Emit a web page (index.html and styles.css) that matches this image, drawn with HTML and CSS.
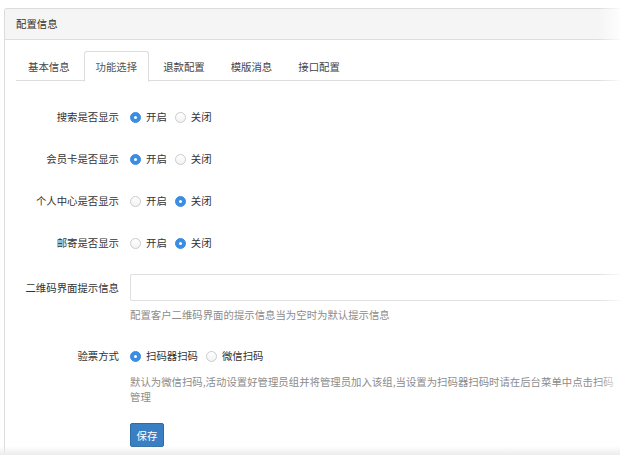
FILE: index.html
```html
<!DOCTYPE html>
<html lang="zh-CN">
<head>
    <meta charset="UTF-8">
    <title>配置信息</title>
    <link rel="stylesheet" href="styles.css">
</head>
<body>

    <div class="panel">
        <div class="panel-heading">配置信息</div>
        <div class="panel-body">
            <ul class="nav-tabs">
                <li><a href="#">基本信息</a></li>
                <li class="active"><a href="#">功能选择</a></li>
                <li><a href="#">退款配置</a></li>
                <li><a href="#">模版消息</a></li>
                <li><a href="#">接口配置</a></li>
            </ul>

            <form class="form">
                <div class="form-group">
                    <label class="control-label">搜索是否显示</label>
                    <div class="controls">
                        <label class="radio"><span class="dot checked"></span>开启</label>
                        <label class="radio"><span class="dot"></span>关闭</label>
                    </div>
                </div>
                <div class="form-group">
                    <label class="control-label">会员卡是否显示</label>
                    <div class="controls">
                        <label class="radio"><span class="dot checked"></span>开启</label>
                        <label class="radio"><span class="dot"></span>关闭</label>
                    </div>
                </div>
                <div class="form-group">
                    <label class="control-label">个人中心是否显示</label>
                    <div class="controls">
                        <label class="radio"><span class="dot"></span>开启</label>
                        <label class="radio"><span class="dot checked"></span>关闭</label>
                    </div>
                </div>
                <div class="form-group">
                    <label class="control-label">邮寄是否显示</label>
                    <div class="controls">
                        <label class="radio"><span class="dot"></span>开启</label>
                        <label class="radio"><span class="dot checked"></span>关闭</label>
                    </div>
                </div>
                <div class="form-group input-group">
                    <label class="control-label">二维码界面提示信息</label>
                    <div class="controls">
                        <input type="text" class="form-control">
                        <p class="help-block">配置客户二维码界面的提示信息当为空时为默认提示信息</p>
                    </div>
                </div>
                <div class="form-group ticket-group">
                    <label class="control-label">验票方式</label>
                    <div class="controls">
                        <div class="radio-row">
                            <label class="radio"><span class="dot checked"></span>扫码器扫码</label>
                            <label class="radio"><span class="dot"></span>微信扫码</label>
                        </div>
                        <p class="help-block long">默认为微信扫码,活动设置好管理员组并将管理员加入该组,当设置为扫码器扫码时请在后台菜单中点击扫码管理</p>
                        <button type="button" class="btn-primary">保存</button>
                    </div>
                </div>
            </form>
        </div>
    </div>

    <div class="fade-right"></div>
    <div class="fade-bottom"></div>

</body>
</html>
```

FILE: styles.css
```css
* {
    margin: 0;
    padding: 0;
    box-sizing: border-box;
}

html, body {
    height: 100%;
}

body {
    font-family: 'Noto Sans CJK SC', 'Liberation Sans', sans-serif;
    font-size: 10.4px;
    color: #333;
    background: #fff;
    overflow: hidden;
    position: relative;
}

/* Panel - right and bottom edges run off the shot */
.panel {
    margin: 8px 0 0 4px;
    height: calc(100% - 8px);
    overflow: hidden;
    border: 1px solid #dcdcdc;
    border-right: none;
    border-bottom: none;
    border-radius: 3px 0 0 0;
}

.panel-heading {
    height: 31px;
    line-height: 30px;
    padding: 0 11px;
    background-color: #f5f5f5;
    border-bottom: 1px solid #dedede;
    color: #333;
}

.panel-body {
    padding: 11px 0 0 11px;
}

/* Tabs */
.nav-tabs {
    list-style: none;
    display: flex;
    height: 30px;
    border-bottom: 1px solid #ddd;
}

.nav-tabs li {
    margin-right: 2px;
}

.nav-tabs li a {
    display: block;
    height: 30px;
    line-height: 29px;
    padding: 0 11px;
    color: #444;
    text-decoration: none;
    border: 1px solid transparent;
    border-radius: 3px 3px 0 0;
}

.nav-tabs li.active a {
    height: 31px;
    background: #fff;
    border-color: #ddd #ddd transparent;
    color: #555;
}

/* Form */
.form {
    padding-top: 25px;
}

.form-group {
    display: grid;
    grid-template-columns: 103px 1fr;
    column-gap: 11px;
    margin-bottom: 20px;
}

.control-label {
    text-align: right;
    line-height: 22px;
    color: #333;
}

.controls {
    display: flex;
    align-items: center;
    min-height: 22px;
}

.input-group .controls,
.ticket-group .controls {
    display: block;
}

.input-group .control-label {
    line-height: 27px;
}

.radio-row {
    display: flex;
    align-items: center;
    height: 22px;
}

.radio {
    display: flex;
    align-items: center;
    margin-right: 8px;
    color: #333;
    line-height: 22px;
}

.dot {
    width: 11px;
    height: 11px;
    border-radius: 50%;
    border: 1px solid #cbcbcb;
    background: linear-gradient(#fff, #f2f2f2);
    margin-right: 5px;
    position: relative;
}

.dot.checked {
    border-color: #3b8de4;
    background: #3b8de4;
}

.dot.checked::after {
    content: '';
    position: absolute;
    left: 3px;
    top: 3px;
    width: 3px;
    height: 3px;
    border-radius: 50%;
    background: #fff;
}

.form-control {
    display: block;
    width: 100%;
    height: 27px;
    border: 1px solid #e0e0e0;
    border-right: none;
    border-radius: 2px 0 0 2px;
    background: #fff;
    outline: none;
}

.help-block {
    margin-top: 6px;
    margin-bottom: 3px;
    line-height: 15px;
    color: #8c8c8c;
}

.help-block.long {
    max-width: 488px;
    margin-top: 7px;
}

.btn-primary {
    margin-top: 16px;
    width: 34px;
    height: 24px;
    font-family: inherit;
    font-size: 10.4px;
    color: #fff;
    background-color: #3a7fc3;
    border: 1px solid #2e6da4;
    border-radius: 2px;
    cursor: pointer;
}

/* Edge shading of the screenshot */
.fade-right {
    position: absolute;
    top: 0;
    right: 0;
    width: 22px;
    height: 100%;
    background: linear-gradient(to right, rgba(255, 255, 255, 0), rgba(255, 255, 255, 0.85));
}

.fade-bottom {
    position: absolute;
    left: 0;
    bottom: 0;
    width: 100%;
    height: 9px;
    background: linear-gradient(rgba(236, 236, 236, 0), #ececec);
}
```
